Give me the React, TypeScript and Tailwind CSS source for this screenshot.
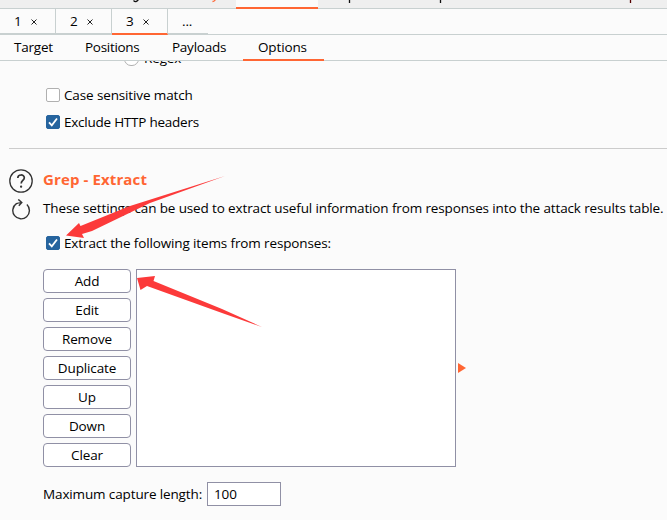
import React from 'react';

const Tab = ({ n, active = false }: { n: string; active?: boolean }) => (
  <div className={`flex h-[26px] w-14 shrink-0 items-start border-r border-r-[#c8d0d0] border-b-2 pl-[14px] pt-[2px] ${active ? 'border-b-[#ff6633]' : 'border-b-[#c8d0d0]'}`}>
    <span className="w-[17px] leading-5">{n}</span>
    <svg className="mt-[8px]" width="6" height="6" viewBox="0 0 6 6"><path d="M.5 .5l5 5M5.5 .5l-5 5" stroke="#222" /></svg>
  </div>
);

const Check = ({ on = false }: { on?: boolean }) => (
  <svg width="14" height="14" viewBox="0 0 14 14" className="shrink-0">
    <rect x=".5" y=".5" width="13" height="13" rx="1.5" fill={on ? '#26649e' : '#fff'} stroke={on ? '#26649e' : '#b0b0b0'} />
    {on && <path d="M3 7.3l2.8 3L11 3.5" fill="none" stroke="#fff" strokeWidth="1.8" />}
  </svg>
);

const actions = ['Add', 'Edit', 'Remove', 'Duplicate', 'Up', 'Down', 'Clear'];

export default function App() {
  return (
    <div className="relative flex h-[520px] w-[667px] flex-col overflow-hidden bg-[#fbfbfb] font-['Open_Sans','Noto_Sans',sans-serif] text-[13.5px] leading-5 tracking-[-0.13px] whitespace-nowrap text-black">
      <div className="relative h-[9px] shrink-0 border-b border-[#c8d0d0] bg-[#efefef]">
        <div className="ml-[236px] h-[9px] w-[82px] border-b-2 border-[#ff6633] bg-[#fbfbfb]" />
        <svg className="absolute left-0 top-0" width="667" height="8" fill="none">
          <path d="M133.5 .5q2.5 2.5 5-1M349.5 0v3M440.5 0v3" stroke="#111" strokeWidth="1.3" />
          <path d="M630.5 0v3" stroke="#500" strokeWidth="1.3" />
          <path d="M212.5 1.5q2 0 3-2" stroke="#ff6633" strokeWidth="1.3" />
        </svg>
      </div>
      <div className="flex h-[26px] shrink-0 border-b border-[#c8d0d0]">
        <Tab n="1" /><Tab n="2" /><Tab n="3" active />
        <span className="h-[26px] w-10 border-b-2 border-[#c8d0d0] pl-[14px] pt-[2px]">...</span>
      </div>
      <div className="flex h-[26px] shrink-0 border-b border-[#c8d0d0]">
        <span className="ml-[14px] mt-[2px] w-[71px] tracking-[-0.2px]">Target</span>
        <span className="mt-[2px] w-[87px] tracking-[-0.3px]">Positions</span>
        <span className="mt-[2px] w-[71px] tracking-[-0.25px]">Payloads</span>
        <div className="h-[26px] w-[81px] border-b-2 border-[#ff6633] pl-[15px] pt-[2px]">Options</div>
      </div>
      <div className="flex h-[27px] shrink-0 items-start overflow-hidden pl-[124px]">
        <span className="-mt-[9px] h-[14px] w-[15px] rounded-full border border-[#b0b0b0] bg-white" />
        <span className="-mt-[13px] ml-[5px]">Regex</span>
      </div>
      <div className="flex h-[14px] shrink-0 items-center gap-1 pl-[46px]"><Check /><span>Case sensitive match</span></div>
      <div className="mt-[13px] flex h-[14px] shrink-0 items-center gap-1 pl-[46px]"><Check on /><span className="tracking-[-0.24px]">Exclude HTTP headers</span></div>
      <div className="ml-[9px] mt-[19px] h-px shrink-0 bg-[#cccccc]" />
      <div className="mt-[20px] flex h-6 shrink-0 items-center pl-[9px]">
        <svg className="shrink-0" width="24" height="24" viewBox="0 0 24 24" fill="none" stroke="#333" strokeWidth="1.3">
          <circle cx="12" cy="12" r="11.2" />
          <path d="M8.8 9c0-4 6.5-4 6.5-.2 0 2.6-3.1 2.8-3.1 5.7" strokeWidth="1.7" /><circle cx="12.1" cy="17.7" r=".5" fill="#333" />
        </svg>
        <span className="-mt-[5px] ml-[10px] text-[15px] font-bold tracking-[0.12px] text-[#ff6633]">Grep - Extract</span>
      </div>
      <div className="mt-[6px] flex h-[22px] shrink-0 pl-[11px]">
        <svg className="shrink-0" width="20" height="22" viewBox="0 0 20 22" fill="none" stroke="#333" strokeWidth="1.4">
          <path d="M15.9 5.6A8.3 8.3 0 1 1 5.4 4.7Q7 3.8 10.8 3.6M7.3 .4L10.8 3.6 7.8 6.8" />
        </svg>
        <span className="-mt-px ml-[12px]">These settings can be used to extract useful information from responses into the attack results table.</span>
      </div>
      <div className="mt-[15px] flex h-[14px] shrink-0 items-center gap-1 pl-[46px]"><Check on /><span>Extract the following items from responses:</span></div>
      <div className="mt-[19px] flex h-[198px] shrink-0 pl-[43px]">
        <div className="flex w-[88px] flex-col gap-[5px]">
          {actions.map(a => <button key={a} className="flex h-6 shrink-0 items-center justify-center rounded-[4px] border border-[#9090a5] bg-white">{a}</button>)}
        </div>
        <div className="ml-[5px] w-[320px] border border-[#9090a5] bg-white" />
        <svg className="ml-[2px] mt-[94px]" width="9" height="10"><path d="M0 0L8 5L0 10Z" fill="#ff6633" /></svg>
      </div>
      <div className="mt-[15px] flex h-6 shrink-0 items-center pl-[43px]">
        <span className="w-[164px]">Maximum capture length:</span>
        <div className="flex h-6 w-[74px] items-center border border-[#9090a5] bg-white pl-[6px]">100</div>
      </div>
      <svg className="pointer-events-none absolute left-0 top-0" width="667" height="520" fill="#fc3a3a">
        <path d="M66 235.5L79 223L80.5 226L130 206L225 176L150 203L92 231L82 234L84 238Z" />
        <path d="M137 278L155 276L153.5 281L222 309L262 327L222 313L147 286L140.5 290Z" />
      </svg>
    </div>
  );
}
